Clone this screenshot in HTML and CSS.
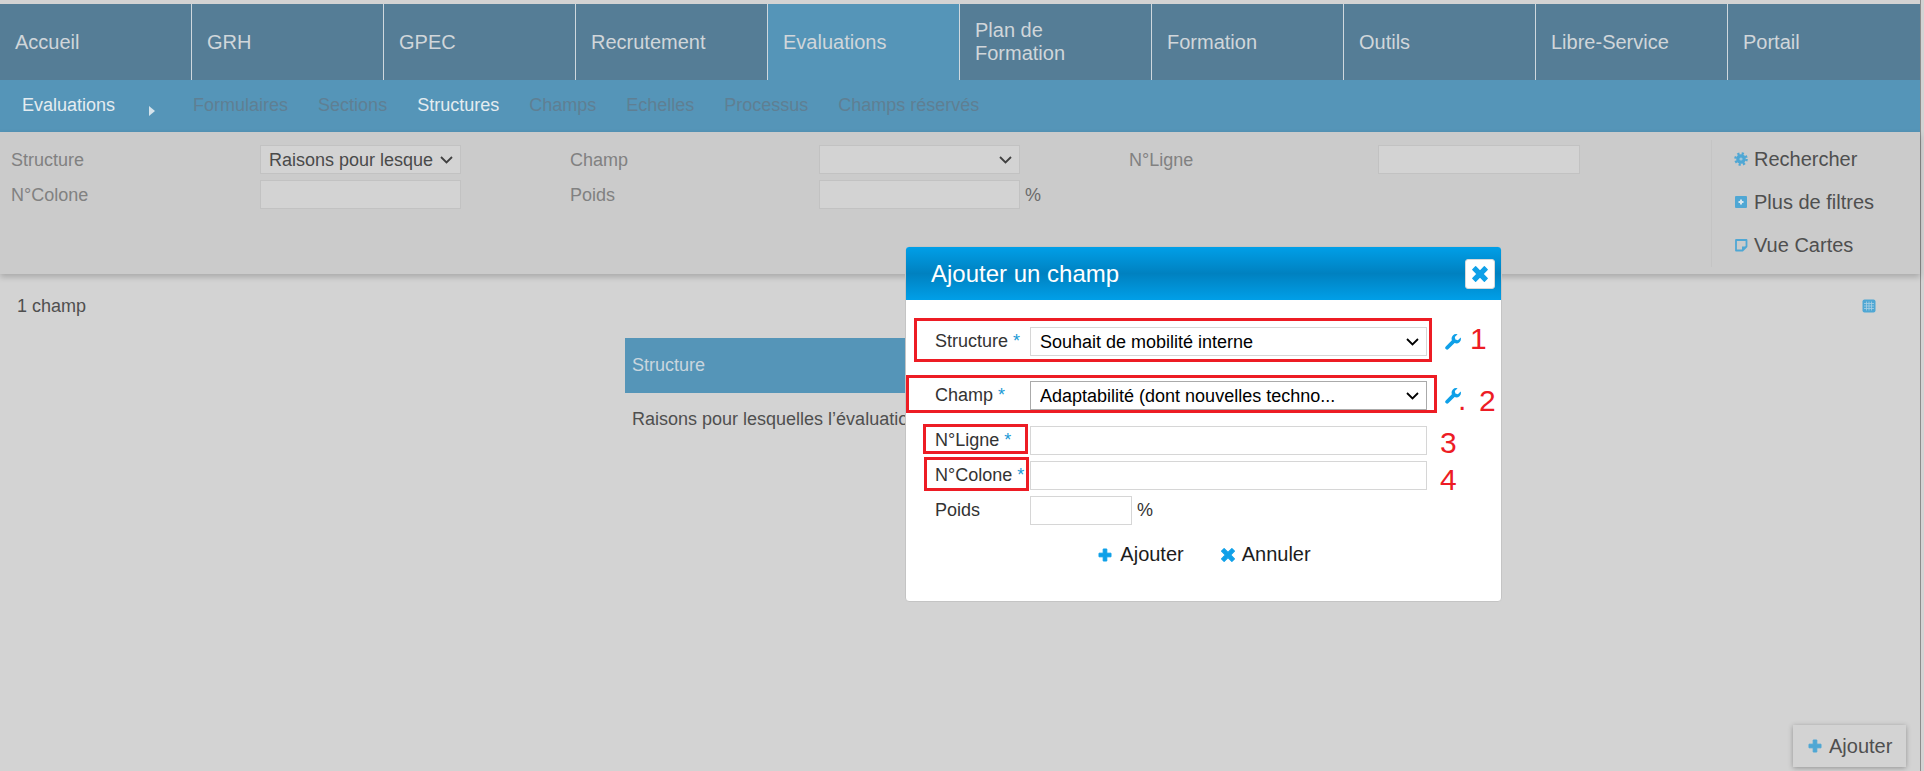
FILE: index.html
```html
<!DOCTYPE html>
<html lang="fr">
<head>
<meta charset="utf-8">
<title>Ajouter un champ</title>
<link rel="stylesheet" href="styles.css">
</head>
<body>
<svg class="sprites" width="0" height="0" aria-hidden="true">
  <symbol id="i-plus" viewBox="0 0 14 14"><path d="M5.200 1h3.600v4.200H13v3.600H8.800V13H5.200V8.800H1V5.200h4.200z" fill="currentColor" stroke="currentColor" stroke-width="1" stroke-linejoin="round"/></symbol>
  <symbol id="i-x" viewBox="0 0 14 14"><path d="M5.400 0.600h3.200v4.800h4.800v3.200H8.600v4.800H5.400V8.600H0.600V5.400h4.800z" transform="rotate(45 7 7)" fill="currentColor" stroke="currentColor" stroke-width="1" stroke-linejoin="round"/></symbol>
  <symbol id="i-wrench" viewBox="0 0 16 16"><path d="M15.700 3.400l-2.800 2.800-2.500-.6-.6-2.500L12.600.3a4.600 4.600 0 0 0-5.700 6L.8 12.400a1.900 1.900 0 0 0 2.700 2.700l6.100-6a4.600 4.600 0 0 0 6.100-5.700z" fill="currentColor"/></symbol>
</svg>
<div class="page">
  <nav class="tabs">
    <a class="tab">Accueil</a>
    <a class="tab">GRH</a>
    <a class="tab">GPEC</a>
    <a class="tab">Recrutement</a>
    <a class="tab tab-active">Evaluations</a>
    <a class="tab">Plan de<br>Formation</a>
    <a class="tab">Formation</a>
    <a class="tab">Outils</a>
    <a class="tab">Libre-Service</a>
    <a class="tab">Portail</a>
  </nav>
  <nav class="subnav">
    <span class="subnav-title">Evaluations</span>
    <span class="subnav-arrow"></span>
    <div class="subnav-items">
      <a class="subnav-item">Formulaires</a>
      <a class="subnav-item">Sections</a>
      <a class="subnav-item subnav-current">Structures</a>
      <a class="subnav-item">Champs</a>
      <a class="subnav-item">Echelles</a>
      <a class="subnav-item">Processus</a>
      <a class="subnav-item">Champs réservés</a>
    </div>
  </nav>
  <section class="filters">
    <div class="filter-grid">
      <label class="filter-label">Structure</label>
      <select class="filter-field filter-select"><option>Raisons pour lesquelles l’évaluation</option></select>
      <label class="filter-label filter-label-inset">Champ</label>
      <select class="filter-field filter-select"><option></option></select>
      <label class="filter-label filter-label-inset">N°Ligne</label>
      <input class="filter-field" type="text">
      <label class="filter-label">N°Colone</label>
      <input class="filter-field" type="text">
      <label class="filter-label filter-label-inset">Poids</label>
      <div class="unit-cell"><input class="filter-field" type="text"><span class="filter-unit">%</span></div>
    </div>
    <div class="filter-actions">
      <a class="filter-action">
        <svg class="action-icon" viewBox="0 0 14 14"><circle cx="7" cy="7" r="4.800" fill="#4fa7d4"/><circle cx="7" cy="7" r="5.600" fill="none" stroke="#4fa7d4" stroke-width="2.400" stroke-dasharray="2.200 2.200"/><circle cx="7" cy="7" r="1.600" fill="#9cc6dc"/></svg>
        Rechercher</a>
      <a class="filter-action">
        <svg class="action-icon" viewBox="0 0 14 14"><rect x="1" y="1" width="12" height="12" rx="1" fill="#4fa7d4"/><path d="M6 4.500h2V6h1.500v2H8v1.500H6V8H4.500V6H6z" fill="#d6e6ee"/></svg>
        Plus de filtres</a>
      <a class="filter-action">
        <svg class="action-icon" viewBox="0 0 14 14"><path d="M2 2h10.500v6.500L8.500 12.500H2z" fill="none" stroke="#4fa7d4" stroke-width="1.800" stroke-linejoin="round"/><path d="M8 12.500V8.500h4.500z" fill="#4fa7d4"/></svg>
        Vue Cartes</a>
    </div>
  </section>
  <div class="result-bar">
    <span>1 champ</span>
    <svg class="grid-icon" viewBox="0 0 14 14"><rect x="0.500" y="0.500" width="13" height="13" rx="2" fill="#4fa7d4"/><path d="M2 4.500h10M2 7h10M2 9.500h10M4.500 2.500v9M7 2.500v9M9.500 2.500v9" stroke="#a9cfe3" stroke-width="0.800"/></svg>
  </div>
  <div class="table">
    <div class="table-head">Structure</div>
    <div class="table-row">Raisons pour lesquelles l’évaluation n’a pas eu lieu</div>
  </div>
</div>

<a class="float-add">
  <svg class="float-icon"><use href="#i-plus"/></svg>Ajouter
</a>

<div class="modal">
  <header class="modal-head">
    <h2 class="modal-title">Ajouter un champ</h2>
    <button class="modal-close" type="button"><svg class="close-icon"><use href="#i-x"/></svg></button>
  </header>
  <form class="modal-form">
    <div class="form-row form-row-first">
      <label class="form-label">Structure <b class="req">*</b></label>
      <select class="form-field form-select"><option>Souhait de mobilité interne</option></select>
      <svg class="wrench"><use href="#i-wrench"/></svg>
    </div>
    <div class="form-row form-row-second">
      <label class="form-label">Champ <b class="req">*</b></label>
      <select class="form-field form-select field-focus"><option>Adaptabilité (dont nouvelles techno...</option></select>
      <svg class="wrench"><use href="#i-wrench"/></svg>
    </div>
    <div class="form-row">
      <label class="form-label">N°Ligne <b class="req">*</b></label>
      <input class="form-field" type="text">
    </div>
    <div class="form-row">
      <label class="form-label">N°Colone <b class="req">*</b></label>
      <input class="form-field" type="text">
    </div>
    <div class="form-row">
      <label class="form-label">Poids</label>
      <div class="poids-cell"><input class="form-field poids-input" type="text"><span class="form-unit">%</span></div>
    </div>
  </form>
  <div class="modal-actions">
    <a class="modal-action"><svg class="modal-action-icon"><use href="#i-plus"/></svg>Ajouter</a>
    <a class="modal-action modal-action-x"><svg class="modal-action-icon"><use href="#i-x"/></svg>Annuler</a>
  </div>
</div>

<div class="mark mark-1"></div>
<div class="mark mark-2"></div>
<div class="mark mark-3"></div>
<div class="mark mark-4"></div>
<span class="num num-1">1</span>
<span class="num num-dot">.</span>
<span class="num num-2">2</span>
<span class="num num-3">3</span>
<span class="num num-4">4</span>
</body>
</html>
```

FILE: styles.css
```css
* { box-sizing: border-box; }
html, body { margin: 0; height: 771px; }
body {
  position: relative;
  overflow: hidden;
  background: #d3d3d3;
  font-family: "Liberation Sans", Arial, sans-serif;
  font-size: 18px;
  color: #4f4f4f;
}
.sprites { position: absolute; }
.page {
  width: 1921px;
  height: 771px;
  padding-top: 4px;
  border-right: 1px solid #8c8c8c;
}

/* main tabs */
.tabs { display: flex; height: 76px; background: #557d96; }
.tab {
  display: flex;
  align-items: center;
  width: 192px;
  padding-left: 15px;
  border-right: 1px solid #cfd8de;
  color: #d0d6da;
  font-size: 20px;
  line-height: 23px;
}
.tab:last-child { border-right: 0; }
.tab-active { background: #5595b8; }

/* sub navigation */
.subnav {
  display: flex;
  align-items: center;
  height: 52px;
  padding: 0 0 2px 22px;
  background: #5595b8;
}
.subnav-title { color: #e4ecf0; }
.subnav-arrow {
  margin: 11px 38px 0 34px;
  border-left: 6px solid #d5e3eb;
  border-top: 5px solid transparent;
  border-bottom: 5px solid transparent;
}
.subnav-items { display: flex; gap: 30px; }
.subnav-item { color: #5f7f93; }
.subnav-current { color: #e4ecf0; }

/* filters */
.filters {
  position: relative;
  display: flex;
  justify-content: space-between;
  height: 142px;
  background: #cbcbcb;
  box-shadow: 0 3px 6px rgba(0, 0, 0, .2);
}
.filter-grid {
  display: grid;
  grid-template-columns: 249px 201px 358px 201px 358px 202px;
  grid-auto-rows: 29px;
  row-gap: 6px;
  align-items: center;
  margin-top: 13px;
  margin-left: 11px;
  height: 64px;
}
.filter-label { padding-top: 2px; color: #818181; }
.filter-label-inset { padding-left: 109px; }
.filter-field {
  width: 100%;
  height: 29px;
  background-color: #d3d3d3;
  border: 1px solid #c2c2c2;
  border-radius: 0;
  font: 18px "Liberation Sans", Arial, sans-serif;
  color: #4a4a4a;
  padding: 0 0 0 8px;
}
.filter-select {
  appearance: none;
  padding-right: 27px;
  background-image: url("data:image/svg+xml,%3Csvg xmlns='http://www.w3.org/2000/svg' width='13' height='8'%3E%3Cpath d='M1 1l5.500 5.500L12 1' fill='none' stroke='%23404040' stroke-width='1.800'/%3E%3C/svg%3E");
  background-repeat: no-repeat;
  background-position: right 7px center;
}
.unit-cell { display: flex; align-items: center; gap: 5px; width: 201px; }
.unit-cell .filter-field { flex: 0 0 201px; }
.filter-unit { padding-top: 2px; color: #6a6a6a; }
.filter-actions {
  display: flex;
  flex-direction: column;
  gap: 19px;
  width: 209px;
  height: 127px;
  margin-top: 8px;
  padding: 7px 0 0 22px;
  border-left: 1px solid #c4c4c4;
}
.filter-action { display: flex; align-items: center; gap: 6px; height: 24px; font-size: 20px; line-height: 24px; }
.action-icon { flex: none; width: 14px; height: 14px; }

/* results */
.result-bar {
  display: flex;
  align-items: center;
  justify-content: space-between;
  height: 24px;
  margin-top: 20px;
  padding: 0 44px 0 17px;
}
.grid-icon { width: 14px; height: 14px; }
.table { width: 670px; margin: 20px 0 0 625px; }
.table-head {
  display: flex;
  align-items: center;
  height: 55px;
  padding-left: 7px;
  background: #5595b8;
  color: #c9d6de;
}
.table-row {
  display: flex;
  align-items: center;
  height: 52px;
  padding-left: 7px;
  white-space: nowrap;
}

/* floating add button */
.float-add {
  position: absolute;
  right: 18px;
  bottom: 4px;
  display: flex;
  align-items: center;
  gap: 7px;
  width: 113px;
  height: 42px;
  padding-left: 15px;
  background: #d3d3d3;
  box-shadow: 0 1px 5px rgba(0, 0, 0, .3);
  font-size: 20px;
}
.float-icon { width: 14px; height: 14px; color: #4fa7d4; }

/* dialog */
.modal {
  position: absolute;
  left: 905px;
  top: 246px;
  width: 597px;
  height: 356px;
  background: #fff;
  border: 1px solid #c4c4c4;
  border-radius: 4px;
  color: #333;
}
.modal-head {
  display: flex;
  align-items: center;
  justify-content: space-between;
  height: 53px;
  padding: 0 6px 0 25px;
  border-radius: 3px 3px 0 0;
  background: linear-gradient(#009fe8, #0081c0 50%, #009fe8);
}
.modal-title { margin: 0; font-size: 24px; font-weight: 400; color: #fff; }
.modal-close {
  display: flex;
  align-items: center;
  justify-content: center;
  width: 30px;
  height: 30px;
  padding: 0;
  background: #fff;
  border: 1px solid #d8d8d8;
  border-radius: 3px;
}
.close-icon { width: 18px; height: 18px; color: #0fa0e8; }
.modal-form {
  display: flex;
  flex-direction: column;
  gap: 6px;
  padding: 27px 0 0 29px;
}
.form-row {
  display: grid;
  grid-template-columns: 95px 397px 34px;
  align-items: center;
  height: 29px;
}
.form-row-first { margin-bottom: 19px; }
.form-row-second { margin-bottom: 10px; }
.form-label { white-space: nowrap; }
.form-field {
  width: 100%;
  height: 29px;
  background-color: #fff;
  border: 1px solid #d6d6d6;
  border-radius: 0;
  font: 18px "Liberation Sans", Arial, sans-serif;
  color: #000;
  padding: 0 0 0 9px;
}
.form-select {
  appearance: none;
  background-image: url("data:image/svg+xml,%3Csvg xmlns='http://www.w3.org/2000/svg' width='13' height='8'%3E%3Cpath d='M1 1l5.500 5.500L12 1' fill='none' stroke='%23000' stroke-width='1.800'/%3E%3C/svg%3E");
  background-repeat: no-repeat;
  background-position: right 7px center;
}
.field-focus { border-color: #aaa; }
.req { font-weight: 400; color: #1a9ad6; }
.wrench { width: 16px; height: 16px; margin-left: 18px; color: #0fa0e8; }
.poids-cell { display: flex; align-items: center; gap: 5px; }
.poids-input { flex: 0 0 102px; width: 102px; }
.form-unit { color: #333; }
.modal-actions {
  display: flex;
  justify-content: center;
  gap: 36px;
  margin-top: 18px;
  padding-left: 2px;
}
.modal-action { display: flex; align-items: center; gap: 8px; font-size: 20px; line-height: 23px; color: #1c1c1c; }
.modal-action-icon { width: 14px; height: 14px; color: #0fa0e8; }
.modal-action-x { gap: 6px; }
.modal-action-x .modal-action-icon { width: 16px; height: 16px; }

/* red annotations drawn over the dialog */
.mark { position: absolute; border: 3px solid #ed1c24; }
.mark-1 { left: 914px; top: 318px; width: 518px; height: 44px; }
.mark-2 { left: 906px; top: 375px; width: 531px; height: 38px; }
.mark-3 { left: 923px; top: 424px; width: 105px; height: 30px; }
.mark-4 { left: 924px; top: 457px; width: 105px; height: 34px; }
.num { position: absolute; color: #ed1c24; font-size: 30px; line-height: 32px; }
.num-1 { left: 1470px; top: 323px; }
.num-dot { left: 1458px; top: 384px; }
.num-2 { left: 1479px; top: 385px; }
.num-3 { left: 1440px; top: 427px; }
.num-4 { left: 1440px; top: 464px; }
```
